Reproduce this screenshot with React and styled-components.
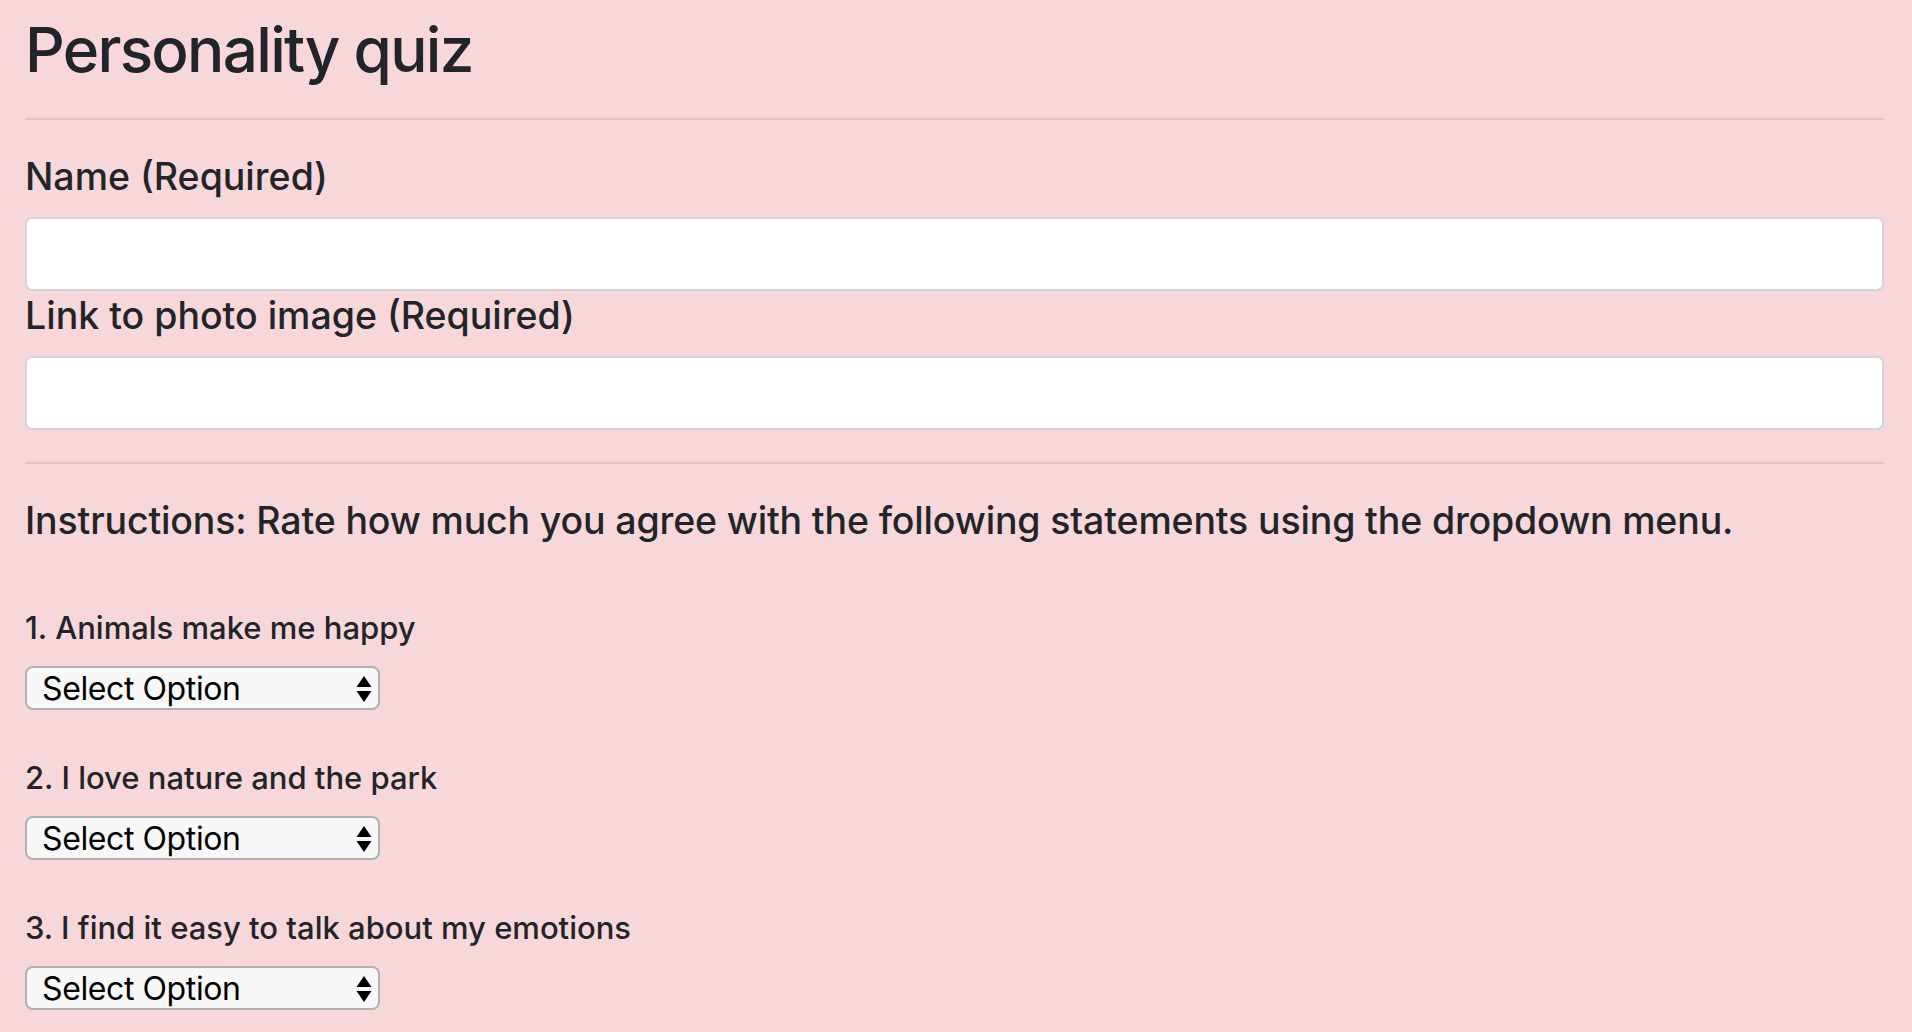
import React from 'react';
import styled, { createGlobalStyle } from 'styled-components';

// Page-wide defaults
const GlobalStyle = createGlobalStyle`
  html, body {
    margin: 0;
    padding: 0;
    background-color: #f8d7da; // pink alert-style background
  }
  body {
    font-family: 'Inter', 'Liberation Sans', sans-serif;
    color: #212529;
  }
`;

const Page = styled.main`
  padding: 12px 28px 20px 25px;
`;

const Title = styled.h1`
  margin: 0;
  font-size: 62px;
  font-weight: 500;
  line-height: 75px;
  letter-spacing: -1.7px;
`;

const Divider = styled.hr`
  border: 0;
  height: 2px;
  background-color: #e3c2c5;
  margin: ${(p) => p.$top}px 0 34px;
`;

const FieldLabel = styled.label`
  display: block;
  font-size: 37.5px;
  font-weight: 500;
  line-height: 45px;
  margin-bottom: 18px;
`;

const TextInput = styled.input`
  display: block;
  box-sizing: border-box;
  width: 100%;
  height: 74px;
  margin: 0 0 2px;
  padding: 0 20px;
  border: 2px solid #d0d5dc;
  border-radius: 7px;
  background: #fff;
  font-family: inherit;
  font-size: 30px;
  outline: none;
`;

const Instructions = styled.p`
  margin: 0 0 67px;
  font-size: 37.5px;
  font-weight: 500;
  line-height: 45px;
  letter-spacing: -0.15px;
`;

const Question = styled.div`
  display: flex;
  flex-direction: column;
  align-items: flex-start;
  gap: 20px;
  margin-bottom: 50px;
`;

const QuestionText = styled.label`
  font-size: 31px;
  font-weight: 500;
  line-height: 36px;
`;

const SelectWrap = styled.div`
  position: relative;
  width: 355px;
  height: 44px;
`;

const Select = styled.select`
  appearance: none;
  -webkit-appearance: none;
  box-sizing: border-box;
  width: 100%;
  height: 100%;
  padding: 0 40px 0 15px;
  border: 2px solid #b0b0b0;
  border-radius: 8px;
  background-color: #f8f8f8;
  color: #000;
  font-family: 'Inter', 'Liberation Sans', sans-serif;
  font-size: 32px;
  letter-spacing: -0.4px;
  outline: none;
`;

// Up/down arrows of the native select, drawn over the right edge
const Arrows = styled.svg`
  position: absolute;
  right: 8px;
  top: 10px;
  width: 16px;
  height: 26px;
  pointer-events: none;
`;

const questions = [
  '1. Animals make me happy',
  '2. I love nature and the park',
  '3. I find it easy to talk about my emotions',
];

const RatingSelect = ({ id }) => (
  <SelectWrap>
    <Select id={id} defaultValue="">
      <option value="">Select Option</option>
      <option value="1">Strongly disagree</option>
      <option value="2">Disagree</option>
      <option value="3">Neutral</option>
      <option value="4">Agree</option>
      <option value="5">Strongly agree</option>
    </Select>
    <Arrows viewBox="0 0 16 26">
      <path d="M8 0 L15.5 11 L0.5 11 Z" fill="#000" />
      <path d="M0.5 15 L15.5 15 L8 26 Z" fill="#000" />
    </Arrows>
  </SelectWrap>
);

const App = () => {
  return (
    <>
      <GlobalStyle />
      <Page>
        <Title>Personality quiz</Title>
        <Divider $top={31} />
        <FieldLabel htmlFor="name">Name (Required)</FieldLabel>
        <TextInput id="name" type="text" />
        <FieldLabel htmlFor="photo">Link to photo image (Required)</FieldLabel>
        <TextInput id="photo" type="text" />
        <Divider $top={32} />
        <Instructions>
          Instructions: Rate how much you agree with the following statements using the dropdown menu.
        </Instructions>
        {questions.map((q, i) => (
          <Question key={i}>
            <QuestionText htmlFor={`q${i}`}>{q}</QuestionText>
            <RatingSelect id={`q${i}`} />
          </Question>
        ))}
      </Page>
    </>
  );
};

export default App;
